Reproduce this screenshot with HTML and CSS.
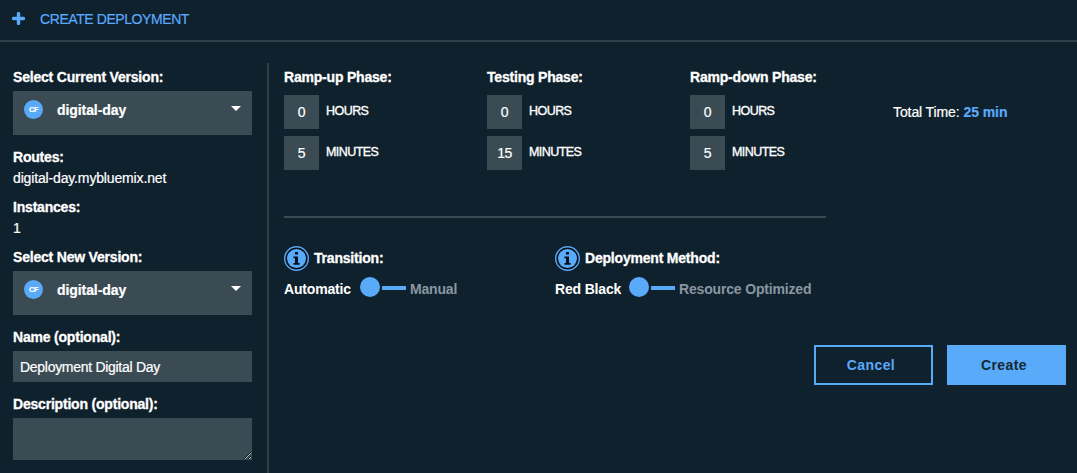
FILE: index.html
```html
<!DOCTYPE html>
<html lang="en">
<head>
<meta charset="utf-8">
<title>Create Deployment</title>
<link rel="stylesheet" href="styles.css">
</head>
<body>
<header class="header">
  <svg class="plus" width="13" height="13" viewBox="0 0 13 13"><path d="M6.5 1.6v9.8M1.6 6.5h9.8" stroke="#5aaafa" stroke-width="3.4" stroke-linecap="round"/></svg>
  <h1 class="title">CREATE DEPLOYMENT</h1>
</header>
<main class="layout">
  <aside class="sidebar">
    <div class="label">Select Current Version:</div>
    <div class="select">
      <span class="cf">CF</span><span class="select-value">digital-day</span>
      <svg class="caret" width="10" height="5" viewBox="0 0 10 5"><path d="M0 0h10L5 5z" fill="#fff"/></svg>
    </div>
    <div class="label gap">Routes:</div>
    <div class="value route">digital-day.mybluemix.net</div>
    <div class="label gap-small">Instances:</div>
    <div class="value">1</div>
    <div class="label gap-small">Select New Version:</div>
    <div class="select">
      <span class="cf">CF</span><span class="select-value">digital-day</span>
      <svg class="caret" width="10" height="5" viewBox="0 0 10 5"><path d="M0 0h10L5 5z" fill="#fff"/></svg>
    </div>
    <div class="label gap">Name (optional):</div>
    <input class="input" type="text" value="Deployment Digital Day">
    <div class="label gap">Description (optional):</div>
    <textarea class="textarea"></textarea>
  </aside>
  <section class="content">
    <div class="top">
      <div class="phases">
        <div class="phase">
          <div class="label">Ramp-up Phase:</div>
          <div class="time"><span class="num">0</span><span class="unit">HOURS</span></div>
          <div class="time"><span class="num">5</span><span class="unit">MINUTES</span></div>
        </div>
        <div class="phase">
          <div class="label">Testing Phase:</div>
          <div class="time"><span class="num">0</span><span class="unit">HOURS</span></div>
          <div class="time"><span class="num">15</span><span class="unit">MINUTES</span></div>
        </div>
        <div class="phase">
          <div class="label">Ramp-down Phase:</div>
          <div class="time"><span class="num">0</span><span class="unit">HOURS</span></div>
          <div class="time"><span class="num">5</span><span class="unit">MINUTES</span></div>
        </div>
      </div>
      <div class="total">Total Time: <strong class="total-value">25 min</strong></div>
    </div>
    <div class="options">
      <div class="option">
        <div class="option-head">
          <svg class="info" width="25" height="25" viewBox="0 0 25 25"><circle cx="12.5" cy="12.5" r="11.8" fill="#07111b" stroke="#5aaafa" stroke-width="1.4"/><circle cx="12.5" cy="12.5" r="9.5" fill="#5aaafa"/><path d="M11 6h3v2.6h-3zM9.4 10.4H14v6.5h1.7v1.8H9.4v-1.8H11v-4.7H9.4z" fill="#07111b"/></svg>
          <span class="label">Transition:</span>
        </div>
        <div class="toggle"><span class="on automatic">Automatic</span>
          <svg class="slider" width="46" height="20" viewBox="0 0 46 20"><circle cx="10" cy="10" r="10" fill="#5aaafa"/><path d="M22 9h24v4H22z" fill="#5aaafa"/></svg>
          <span class="off">Manual</span></div>
      </div>
      <div class="option">
        <div class="option-head">
          <svg class="info" width="25" height="25" viewBox="0 0 25 25"><circle cx="12.5" cy="12.5" r="11.8" fill="#07111b" stroke="#5aaafa" stroke-width="1.4"/><circle cx="12.5" cy="12.5" r="9.5" fill="#5aaafa"/><path d="M11 6h3v2.6h-3zM9.4 10.4H14v6.5h1.7v1.8H9.4v-1.8H11v-4.7H9.4z" fill="#07111b"/></svg>
          <span class="label">Deployment Method:</span>
        </div>
        <div class="toggle"><span class="on red-black">Red Black</span>
          <svg class="slider" width="46" height="20" viewBox="0 0 46 20"><circle cx="10" cy="10" r="10" fill="#5aaafa"/><path d="M22 9h24v4H22z" fill="#5aaafa"/></svg>
          <span class="off">Resource Optimized</span></div>
      </div>
    </div>
    <div class="actions">
      <button class="button cancel">Cancel</button>
      <button class="button create">Create</button>
    </div>
  </section>
</main>
</body>
</html>
```
FILE: styles.css
```css
* { box-sizing: border-box; }
body {
  margin: 0;
  height: 473px;
  overflow: hidden;
  background: #10212e;
  color: #fff;
  font: 14px/20px "Liberation Sans", Arial, sans-serif;
  letter-spacing: -0.5px;
  -webkit-text-stroke: 0.2px currentColor;
}
.header {
  display: flex;
  align-items: center;
  height: 42px;
  padding: 0 12px 3px;
  border-bottom: 2px solid #2d3f49;
}
.plus { margin-right: 15px; }
.title { margin: 0; font-size: 14px; font-weight: 400; color: #5aaafa; letter-spacing: -0.42px; }
.layout { display: flex; padding-top: 21px; }
.sidebar {
  width: 269px;
  height: 410px;
  padding: 4px 15px 0 13px;
  border-right: 2px solid #2d3f49;
}
.label {
  height: 20px;
  font-weight: 700;
  letter-spacing: -0.2px;
  white-space: nowrap;
  -webkit-text-stroke: 0.3px #fff;
}
.select {
  display: flex;
  height: 44px;
  margin-top: 4px;
  padding: 9px 11px 0;
  background: #3a4b54;
}
.cf {
  width: 19px;
  height: 19px;
  border-radius: 50%;
  background: #5aaafa;
  font-size: 7.5px;
  font-weight: 700;
  line-height: 19px;
  text-align: center;
  letter-spacing: -0.5px;
}
.select-value { margin-left: 14px; font-weight: 700; letter-spacing: -0.08px; }
.caret { margin: 6px 0 0 auto; }
.gap { margin-top: 12px; }
.gap-small { margin-top: 9px; }
.value { height: 20px; margin-top: 1px; }
.route { letter-spacing: -0.15px; }
.input {
  display: block;
  width: 239px;
  height: 31px;
  margin: 4px 0 0;
  padding: 1px 7px 0;
  border: 0;
  background: #3a4b54;
  color: #fff;
  font: 14px "Liberation Sans", Arial, sans-serif;
  letter-spacing: -0.29px;
}
.textarea {
  display: block;
  width: 239px;
  height: 42px;
  margin: 4px 0 0;
  border: 0;
  background: #3a4b54;
  resize: both;
}
.content { flex: 1; padding: 4px 11px 0 15px; }
.top { display: flex; }
.phases {
  display: flex;
  width: 542px;
  height: 151px;
  border-bottom: 2px solid #3a4b54;
}
.phase { width: 203px; flex: none; }
.time { display: flex; height: 34px; margin-top: 7px; }
.label + .time { margin-top: 8px; }
.num {
  width: 35px;
  height: 34px;
  background: #3a4b54;
  text-align: center;
  line-height: 35px;
}
.unit { margin-left: 7px; font-size: 12.5px; line-height: 32px; letter-spacing: -0.55px; -webkit-text-stroke: 0.35px #fff; }
.total { margin: 35px 0 0 67px; white-space: nowrap; letter-spacing: -0.1px; }
.total-value { color: #5aaafa; letter-spacing: -0.05px; }
.options { display: flex; margin-top: 28px; }
.option { width: 271px; flex: none; }
.option-head { display: flex; align-items: center; height: 25px; }
.option-head .label { margin-left: 5px; line-height: 19px; }
.toggle { display: flex; height: 20px; margin-top: 6px; font-weight: 700; letter-spacing: -0.17px; white-space: nowrap; -webkit-text-stroke: 0; }
.on, .off { line-height: 25px; }
.automatic { width: 76px; }
.red-black { width: 74px; }
.off { margin-left: 4px; color: #8897a2; }
.actions { display: flex; justify-content: flex-end; gap: 14px; margin-top: 48px; }
.button {
  width: 119px;
  height: 40px;
  padding: 0 5px 0 0;
  border: 2px solid #5aaafa;
  font: 700 14px "Liberation Sans", Arial, sans-serif;
  letter-spacing: 0.4px;
  -webkit-text-stroke: 0;
}
.cancel { background: transparent; color: #5aaafa; }
.create { background: #5aaafa; color: #152935; }
```
